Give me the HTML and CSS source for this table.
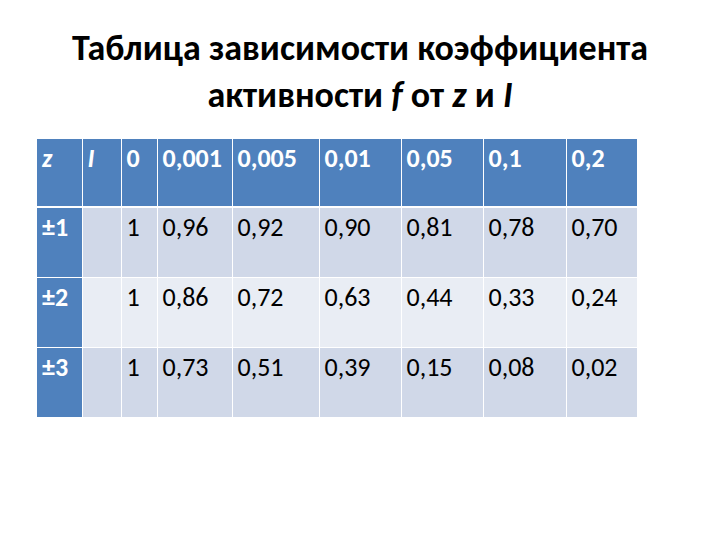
FILE: index.html
```html
<!DOCTYPE html>
<html lang="ru">
<head>
<meta charset="utf-8">
<title>Таблица зависимости коэффициента активности</title>
<link rel="stylesheet" href="styles.css">
</head>
<body>
<div class="slide">
  <h1 class="title">Таблица зависимости коэффициента<br>активности <i>f</i> от <i>z</i> и <i>I</i></h1>
  <table class="grid">
    <colgroup>
      <col class="c1"><col class="c2"><col class="c3"><col class="c4"><col class="c5"><col class="c6"><col class="c7"><col class="c8"><col class="c9">
    </colgroup>
    <thead>
      <tr>
        <th><i>z</i></th><th><i>I</i></th><th>0</th><th>0,001</th><th>0,005</th><th>0,01</th><th>0,05</th><th>0,1</th><th>0,2</th>
      </tr>
    </thead>
    <tbody>
      <tr class="odd">
        <th>±1</th><td></td><td>1</td><td>0,96</td><td>0,92</td><td>0,90</td><td>0,81</td><td>0,78</td><td>0,70</td>
      </tr>
      <tr class="even">
        <th>±2</th><td></td><td>1</td><td>0,86</td><td>0,72</td><td>0,63</td><td>0,44</td><td>0,33</td><td>0,24</td>
      </tr>
      <tr class="odd">
        <th>±3</th><td></td><td>1</td><td>0,73</td><td>0,51</td><td>0,39</td><td>0,15</td><td>0,08</td><td>0,02</td>
      </tr>
    </tbody>
  </table>
</div>
</body>
</html>
```
FILE: styles.css
```css
html, body {
  margin: 0;
  padding: 0;
  background: #ffffff;
}
.slide {
  width: 720px;
  height: 540px;
  overflow: hidden;
  font-family: "Carlito", "Lato", "Liberation Sans", sans-serif;
  color: #000;
}
.title {
  margin: 0;
  padding-top: 25px;
  font-size: 36px;
  line-height: 47px;
  font-weight: 700;
  text-align: center;
  letter-spacing: 0;
}
.title i {
  font-style: italic;
}
.grid {
  margin: 20px 0 0 37px;
  border-collapse: collapse;
  table-layout: fixed;
  width: 600px;
  font-size: 26px;
}
.c1 { width: 45px; }
.c2 { width: 39px; }
.c3 { width: 36px; }
.c4 { width: 75px; }
.c5 { width: 87px; }
.c6 { width: 82px; }
.c7 { width: 82px; }
.c8 { width: 83px; }
.c9 { width: 71px; }
.grid th,
.grid td {
  border-left: 1px solid #ffffff;
  border-right: 1px solid #ffffff;
  border-top: 1px solid #ffffff;
  padding: 4px 0 0 5px;
  vertical-align: top;
  text-align: left;
  line-height: 30px;
  height: 63px;
  box-sizing: border-box;
  white-space: nowrap;
}
.grid tr > :first-child { border-left: none; }
.grid tr > :last-child { border-right: none; }
.grid thead tr > * { border-top: none; }
.grid thead th {
  background: #4f81bd;
  color: #ffffff;
  font-weight: 700;
  height: 68px;
  border-bottom: 2px solid #ffffff;
}
.grid tbody th {
  background: #4f81bd;
  color: #ffffff;
  font-weight: 700;
  height: 70px;
}
.grid tbody td {
  height: 70px;
  font-weight: 400;
}
.grid tr.odd td { background: #d0d8e8; }
.grid tr.even td { background: #e9edf4; }
```
